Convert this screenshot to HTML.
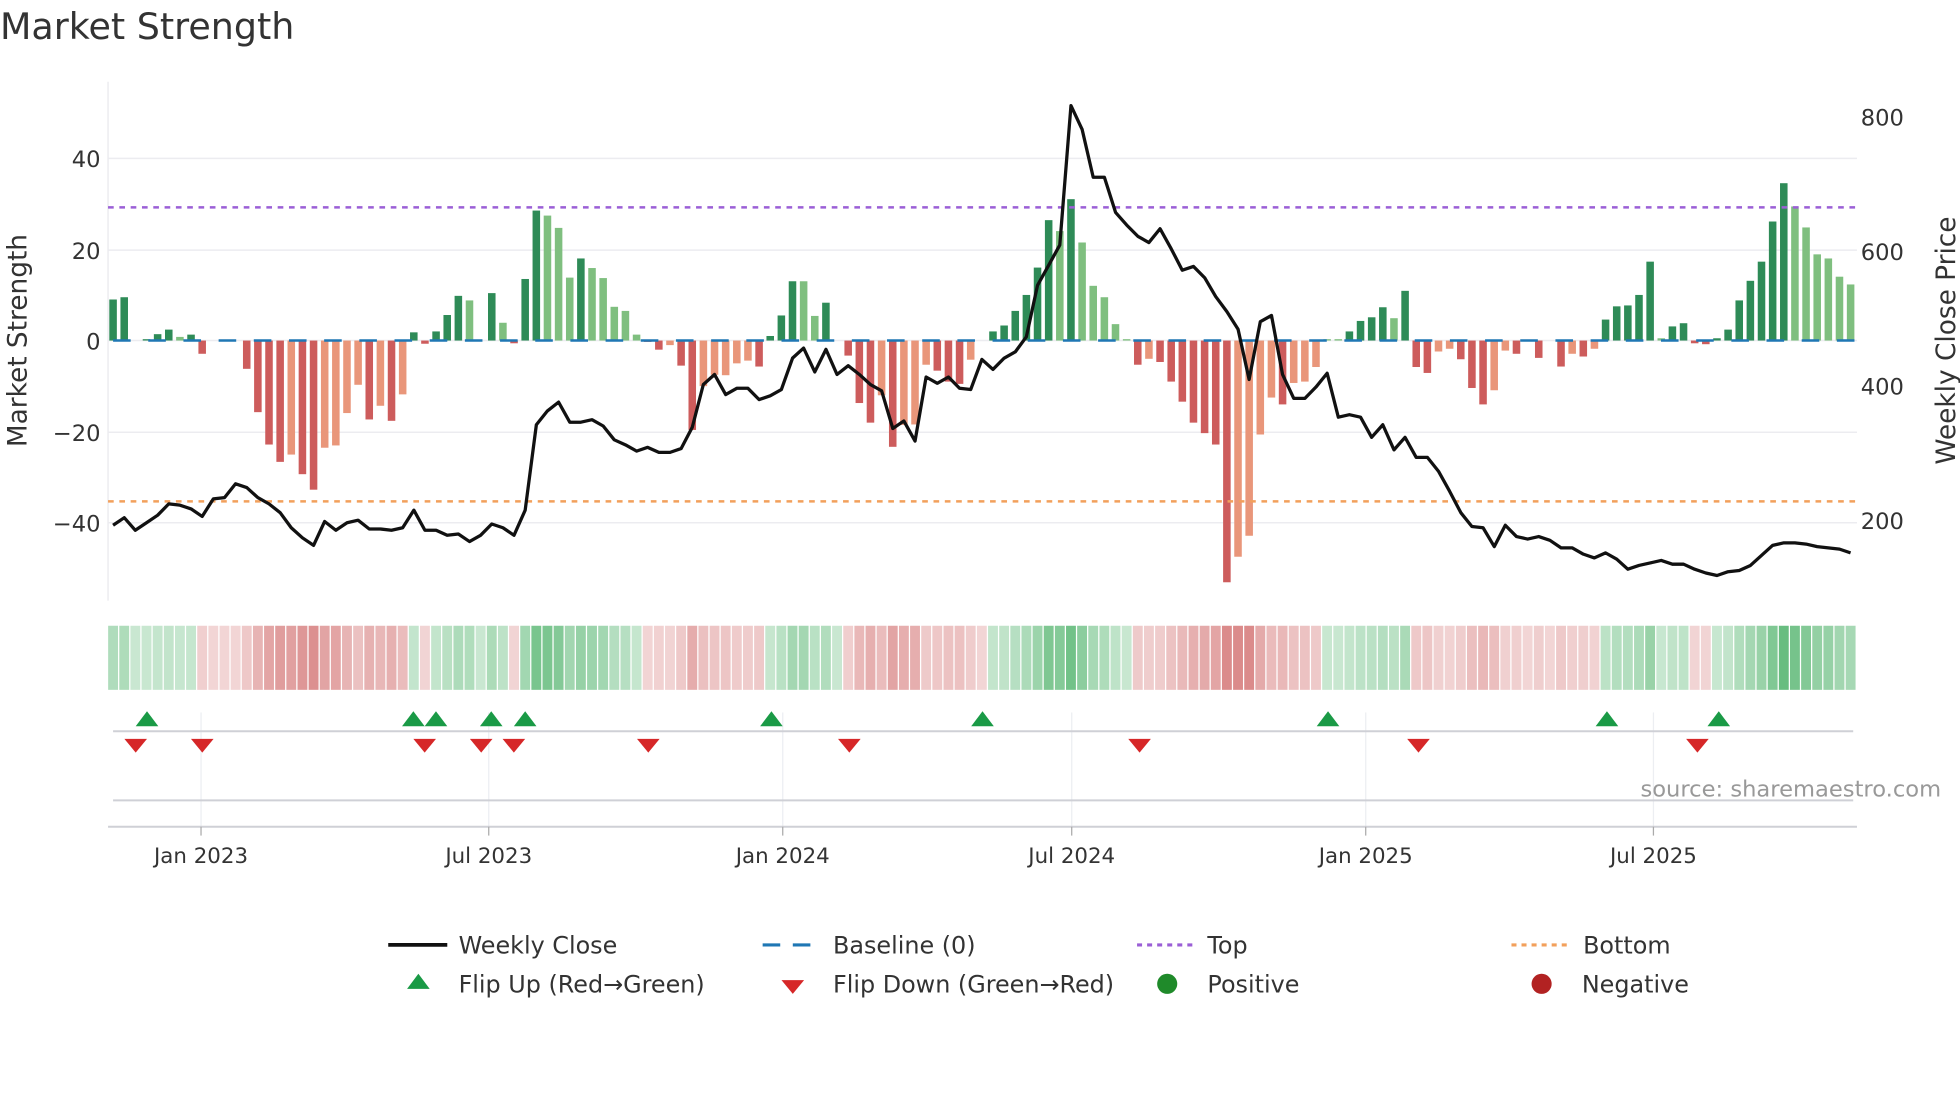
<!DOCTYPE html>
<html><head><meta charset="utf-8"><style>
html,body{margin:0;padding:0;background:#fff;}
svg{display:block;font-family:"DejaVu Sans","Liberation Sans",sans-serif;}
</style></head><body>
<svg id="s" width="1960" height="1102" viewBox="0 0 1560 877" xmlns="http://www.w3.org/2000/svg">
<rect width="1560" height="877" fill="#fff"/>
<text x="0" y="31" font-size="29" fill="#333">Market Strength</text>
<g stroke="#ececf0" stroke-width="1.2">
<line x1="86" y1="126" x2="1478" y2="126"/>
<line x1="86" y1="199" x2="1478" y2="199"/>
<line x1="86" y1="271" x2="1478" y2="271"/>
<line x1="86" y1="344" x2="1478" y2="344"/>
<line x1="86" y1="416" x2="1478" y2="416"/>
<line x1="86" y1="65" x2="86" y2="478"/>
</g>
<g id="bars"></g>
<line x1="86" y1="271" x2="1478" y2="271" stroke="#1f77b4" stroke-width="2" stroke-dasharray="14,14" stroke-dashoffset="-4"/>
<line x1="86" y1="165" x2="1478" y2="165" stroke="#9b5fd6" stroke-width="2" stroke-dasharray="4.5,4.5"/>
<line x1="86" y1="399" x2="1478" y2="399" stroke="#f2a05c" stroke-width="2" stroke-dasharray="4.5,4.5"/>
<polyline id="price" fill="none" stroke="#111" stroke-width="2.6" stroke-linejoin="round"/>
<g font-size="18" fill="#333">
<text x="80" y="133" text-anchor="end">40</text>
<text x="80" y="206" text-anchor="end">20</text>
<text x="80" y="278" text-anchor="end">0</text>
<text x="80" y="351" text-anchor="end">−20</text>
<text x="80" y="423" text-anchor="end">−40</text>
<text x="1481" y="100">800</text>
<text x="1481" y="207">600</text>
<text x="1481" y="314">400</text>
<text x="1481" y="421">200</text>
</g>
<text transform="translate(21,271) rotate(-90)" text-anchor="middle" font-size="21" fill="#333">Market Strength</text>
<text transform="translate(1556,271) rotate(-90)" text-anchor="middle" font-size="21" fill="#333">Weekly Close Price</text>
<g id="heat"></g>
<g stroke="#eceef2" stroke-width="1">
<line x1="160" y1="567" x2="160" y2="658"/><line x1="389" y1="567" x2="389" y2="658"/>
<line x1="623" y1="567" x2="623" y2="658"/><line x1="853" y1="567" x2="853" y2="658"/>
<line x1="1087" y1="567" x2="1087" y2="658"/><line x1="1316" y1="567" x2="1316" y2="658"/>
</g>
<line x1="90" y1="582" x2="1475" y2="582" stroke="#cfd0d6" stroke-width="1.6"/>
<line x1="90" y1="637" x2="1475" y2="637" stroke="#cfd0d6" stroke-width="1.6"/>
<line x1="86" y1="658" x2="1478" y2="658" stroke="#cfd0d6" stroke-width="1.6"/>
<g stroke="#aaa" stroke-width="1">
<line x1="160" y1="658" x2="160" y2="665"/><line x1="389" y1="658" x2="389" y2="665"/>
<line x1="623" y1="658" x2="623" y2="665"/><line x1="853" y1="658" x2="853" y2="665"/>
<line x1="1087" y1="658" x2="1087" y2="665"/><line x1="1316" y1="658" x2="1316" y2="665"/>
</g>
<g id="marks"></g>
<text x="1545" y="634" text-anchor="end" font-size="18" fill="#999">source: sharemaestro.com</text>
<g font-size="17" fill="#333" text-anchor="middle">
<text x="160" y="687">Jan 2023</text><text x="389" y="687">Jul 2023</text>
<text x="623" y="687">Jan 2024</text><text x="853" y="687">Jul 2024</text>
<text x="1087" y="687">Jan 2025</text><text x="1316" y="687">Jul 2025</text>
</g>
<g font-size="19" fill="#333">
<line x1="309" y1="752" x2="356" y2="752" stroke="#111" stroke-width="3"/>
<text x="365" y="759">Weekly Close</text>
<line x1="607" y1="752" x2="652" y2="752" stroke="#1f77b4" stroke-width="2.5" stroke-dasharray="14,10"/>
<text x="663" y="759">Baseline (0)</text>
<line x1="905" y1="752" x2="950" y2="752" stroke="#9b5fd6" stroke-width="2.5" stroke-dasharray="4,4"/>
<text x="961" y="759">Top</text>
<line x1="1203" y1="752" x2="1248" y2="752" stroke="#f2a05c" stroke-width="2.5" stroke-dasharray="4,4"/>
<text x="1260" y="759">Bottom</text>
<polygon points="324,787 342,787 333,775" fill="#1a9a46"/>
<text x="365" y="790">Flip Up (Red→Green)</text>
<polygon points="622,780 640,780 631,791" fill="#d62728"/>
<text x="663" y="790">Flip Down (Green→Red)</text>
<circle cx="929" cy="783" r="8" fill="#1f8a2a"/>
<text x="961" y="790">Positive</text>
<circle cx="1227" cy="783" r="8" fill="#b22222"/>
<text x="1259" y="790">Negative</text>
</g>
</svg>
<script>
var B=[[9,'d'],[9.5,'d'],[0,'d'],[0.3,'d'],[1.4,'d'],[2.4,'d'],[0.8,'l'],[1.3,'d'],[-2.9,'r'],[0,'r'],[0,'r'],[0,'r'],[-6.2,'r'],[-15.7,'r'],[-22.8,'r'],[-26.6,'r'],[-25,'o'],[-29.3,'r'],[-32.7,'r'],[-23.5,'o'],[-23,'o'],[-15.9,'o'],[-9.7,'o'],[-17.3,'r'],[-14.3,'o'],[-17.6,'r'],[-11.8,'o'],[1.8,'d'],[-0.7,'r'],[2,'d'],[5.6,'d'],[9.8,'d'],[8.8,'l'],[0,'r'],[10.4,'d'],[3.9,'l'],[-0.6,'r'],[13.5,'d'],[28.5,'d'],[27.4,'l'],[24.7,'l'],[13.8,'l'],[18,'d'],[15.9,'l'],[13.7,'l'],[7.4,'l'],[6.5,'l'],[1.3,'l'],[-0.3,'r'],[-2,'r'],[-1,'o'],[-5.5,'r'],[-19.6,'r'],[-10,'o'],[-7.5,'o'],[-7.6,'o'],[-5,'o'],[-4.4,'o'],[-5.7,'r'],[1,'d'],[5.5,'d'],[13,'d'],[13,'l'],[5.4,'l'],[8.3,'d'],[0,'d'],[-3.3,'r'],[-13.7,'r'],[-18,'r'],[-12,'o'],[-23.3,'r'],[-18.5,'o'],[-18.4,'o'],[-5.3,'o'],[-6.6,'r'],[-9,'r'],[-9.5,'r'],[-4.2,'o'],[0,'r'],[2,'d'],[3.3,'d'],[6.5,'d'],[10,'d'],[16,'d'],[26.4,'d'],[24,'l'],[31,'d'],[21.5,'l'],[12,'l'],[9.5,'l'],[3.6,'l'],[0.3,'l'],[-5.3,'r'],[-4,'o'],[-4.7,'r'],[-9,'r'],[-13.4,'r'],[-18,'r'],[-20.3,'r'],[-22.8,'r'],[-53,'r'],[-47.4,'o'],[-42.8,'o'],[-20.6,'o'],[-12.5,'o'],[-14,'r'],[-9.3,'o'],[-9,'o'],[-5.8,'o'],[0.3,'l'],[0.3,'l'],[2,'d'],[4.3,'d'],[5.1,'d'],[7.3,'d'],[4.9,'l'],[10.9,'d'],[-5.8,'r'],[-7.1,'r'],[-2.4,'o'],[-1.8,'o'],[-4.1,'r'],[-10.4,'r'],[-14,'r'],[-10.9,'o'],[-2.2,'o'],[-2.9,'r'],[0,'r'],[-3.8,'r'],[0,'r'],[-5.7,'r'],[-2.9,'o'],[-3.5,'r'],[-1.8,'o'],[4.6,'d'],[7.5,'d'],[7.7,'d'],[10,'d'],[17.3,'d'],[0.5,'l'],[3.1,'d'],[3.8,'d'],[-0.6,'r'],[-0.8,'r'],[0.5,'d'],[2.4,'d'],[8.8,'d'],[13.1,'d'],[17.3,'d'],[26.1,'d'],[34.5,'d'],[29.4,'l'],[24.8,'l'],[18.9,'l'],[18,'l'],[14,'l'],[12.3,'l']];
var P=[418,412,422,416,410,401,402,405,411,397,396,385,388,396,401,408,420,428,434,415,422,416,414,421,421,422,420,406,422,422,426,425,431,426,417,420,426,406,338,327,320,336,336,334,339,350,354,359,356,360,360,357,340,306,298,314,309,309,318,315,310,285,277,296,278,298,291,298,306,311,341,335,351,300,305,300,309,310,286,294,285,280,268,227,211,195,84,103,141,141,169,179,188,193,182,198,215,212,221,236,248,262,302,256,251,298,317,317,308,297,332,330,332,348,338,358,348,364,364,375,391,408,419,420,435,418,427,429,427,430,436,436,441,444,440,445,453,450,448,446,449,449,453,456,458,455,454,450,442,434,432,432,433,435,436,437,440];
var C={d:'#2e8b57',l:'#7fbf7f',r:'#cd5c5c',o:'#e9967a'};
var ns='http://www.w3.org/2000/svg',sp=8.865,x0=90,u=3.63;
function el(t,a,p){var e=document.createElementNS(ns,t);for(var k in a)e.setAttribute(k,a[k]);document.getElementById(p).appendChild(e);return e;}
var prevSign=1;
for(var i=0;i<B.length;i++){var v=B[i][0],x=x0+sp*i,h=Math.abs(v)*u;
 if(v!=0)el('rect',{x:x-3,y:v>0?271-h:271,width:6,height:h,fill:C[B[i][1]]},'bars');
 var s=v>0?1:(v<0?-1:prevSign); if(v!=0)prevSign=s;
 var m=Math.min(Math.abs(v)/35,1), a=0.28+0.5*m;
 var col=s>0?'rgba(60,170,90,'+a+')':'rgba(200,80,80,'+(a*0.85)+')';
 el('rect',{x:x-4.43+0.5,y:498,width:sp-1,height:51,fill:col},'heat');}
var pts=[];for(var i=0;i<P.length;i++)pts.push((x0+sp*i).toFixed(1)+','+P[i]);
document.getElementById('price').setAttribute('points',pts.join(' '));
[117,329,347,391,418,614,782,1057,1279,1368].forEach(function(x){el('polygon',{points:(x-9)+',578 '+(x+9)+',578 '+x+',566',fill:'#1a9a46'},'marks');});
[108,161,338,383,409,516,676,907,1129,1351].forEach(function(x){el('polygon',{points:(x-9)+',588 '+(x+9)+',588 '+x+',599',fill:'#d62728'},'marks');});
</script>
</body></html>
